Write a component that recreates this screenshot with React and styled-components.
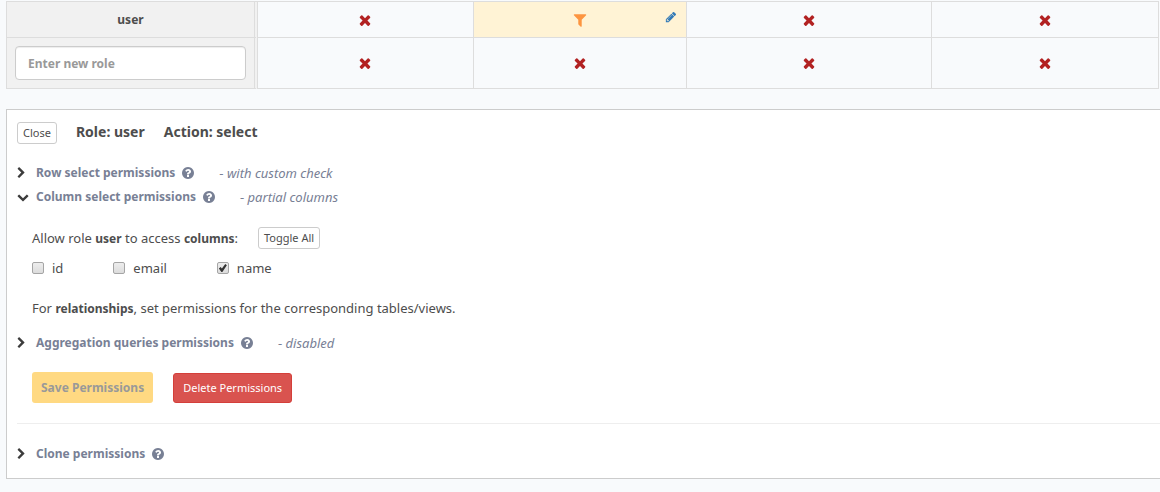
import React, { useState } from "react";
import styled, { createGlobalStyle } from "styled-components";

const GlobalStyle = createGlobalStyle`
  * { box-sizing: border-box; }
  body {
    margin: 0;
    background: #f8fafc;
    color: #4d4d4d;
    font-family: "Noto Sans", "Open Sans", sans-serif;
    font-size: 12px;
    line-height: 20px;
  }
  button, input { font: inherit; color: inherit; }
`;

const ICONS = {
  times:
    "M1490 1322q0 40-28 68l-136 136q-28 28-68 28t-68-28l-294-294-294 294q-28 28-68 28t-68-28l-136-136q-28-28-28-68t28-68l294-294-294-294q-28-28-28-68t28-68l136-136q28-28 68-28t68 28l294 294 294-294q28-28 68-28t68 28l136 136q28 28 28 68t-28 68l-294 294 294 294q28 28 28 68z",
  filter:
    "M1595 295q17 41-14 70l-493 493v742q0 42-39 59-13 5-25 5-27 0-45-19l-256-256q-19-19-19-45v-486l-493-493q-31-29-14-70 17-39 59-39h1280q42 0 59 39z",
  pencil:
    "M491 1536l91-91-235-235-91 91v107h128v128h107zm523-928q0-22-22-22-10 0-17 7l-542 542q-7 7-7 17 0 22 22 22 10 0 17-7l542-542q7-7 7-17zm-54-192l416 416-832 832h-416v-416zm683 96q0 53-37 90l-166 166-416-416 166-165q36-38 90-38 53 0 91 38l235 234q37 39 37 91z",
  question:
    "M1024 1376v-192q0-14-9-23t-23-9h-192q-14 0-23 9t-9 23v192q0 14 9 23t23 9h192q14 0 23-9t9-23zm256-672q0-88-55.5-163t-138.5-116-170-41q-243 0-371 213-15 24 8 42l132 100q7 6 19 6 16 0 25-12 53-68 86-92 34-24 86-24 48 0 85.5 26t37.5 59q0 38-20 61t-68 45q-63 28-115.5 86.5t-52.5 125.5v36q0 14 9 23t23 9h192q14 0 23-9t9-23q0-19 21.5-49.5t54.5-49.5q32-18 49-28.5t46-35 44.5-48 28-60.5 12.5-81zm384 192q0 209-103 385.5t-279.5 279.5-385.5 103-385.5-103-279.5-279.5-103-385.5 103-385.5 279.5-279.5 385.5-103 385.5 103 279.5 279.5 103 385.5z",
  right:
    "M1363 877l-742 742q-19 19-45 19t-45-19l-166-166q-19-19-19-45t19-45l531-531-531-531q-19-19-19-45t19-45l166-166q19-19 45-19t45 19l742 742q19 19 19 45t-19 45z",
  down:
    "M1683 808l-742 741q-19 19-45 19t-45-19l-742-741q-19-19-19-45.5t19-45.5l166-165q19-19 45-19t45 19l531 531 531-531q19-19 45-19t45 19l166 165q19 19 19 45.5t-19 45.5z",
};

const Svg = styled.svg`
  display: block;
  flex: none;
  width: ${(p) => p.$size}px;
  height: ${(p) => p.$size}px;
  fill: currentColor;
`;

const Icon = ({ name, size }) => (
  <Svg viewBox={name === "right" ? "256 0 1792 1792" : "0 0 1792 1792"} $size={size} aria-hidden="true">
    <path d={ICONS[name]} />
  </Svg>
);

const Page = styled.main`
  padding: 1px 0 13px 6px;
`;

const RoleTable = styled.table`
  width: calc(100% - 1px);
  table-layout: fixed;
  border-collapse: separate;
  border-spacing: 0;
  border-top: 1px solid #ddd;
  margin-bottom: 20px;
`;

const Col = styled.col`
  width: ${(p) => p.$width};
`;

const Row = styled.tr`
  height: ${(p) => p.$height}px;
`;

const RoleCell = styled.th`
  padding: 0 8px;
  background: #f1f1f1;
  border: 0 solid #ddd;
  border-width: 0 0 1px 1px;
  border-right: 4px double #ddd;
  text-align: center;
`;

const AccessCell = styled.td`
  position: relative;
  padding: 0;
  border: 0 solid #ddd;
  border-width: 0 1px 1px 0;
  background: ${(p) => (p.$active ? "#fff3d5" : "transparent")};
`;

const AccessButton = styled.button`
  display: flex;
  width: 100%;
  justify-content: center;
  padding: 0;
  border: 0;
  background: none;
  color: ${(p) => (p.$partial ? "#fd9540" : "#b22222")};
`;

const EditMark = styled.span`
  position: absolute;
  top: 9px;
  right: 9px;
  color: #337ab7;
`;

const RoleInput = styled.input`
  display: block;
  width: 100%;
  height: 34px;
  padding: 0 12px;
  border: 1px solid #ccc;
  border-radius: 4px;
  background: #fff;
  box-shadow: inset 0 1px 1px rgba(0, 0, 0, 0.075);
  font-weight: bold;
  &::placeholder { color: #999; opacity: 1; }
`;

const Panel = styled.section`
  padding: 12px 0 12px 10px;
  border: 1px solid #ccc;
  border-right: 0;
  background: #fff;
`;

const PanelHead = styled.header`
  display: flex;
  align-items: flex-start;
  gap: 19px;
  margin-bottom: 17px;
`;

const PanelTitle = styled.h2`
  margin: 0;
  font-size: 14px;
  line-height: 20px;
`;

const SmallButton = styled.button`
  height: 22px;
  padding: 0 5px;
  border: 1px solid #ccc;
  border-radius: 3px;
  background: #fff;
  font-size: 11px;
  line-height: 18px;
`;

const SectionRow = styled.div`
  display: flex;
  align-items: center;
  height: 24px;
  color: #788095;
`;

const SectionToggle = styled.button`
  display: flex;
  align-items: center;
  gap: 7px;
  padding: 0;
  border: 0;
  background: none;
  font-weight: bold;
`;

const Chevron = styled.span`
  color: #3c3c3c;
`;

const Help = styled.span`
  margin-left: 6px;
`;

const Status = styled.span`
  margin-left: 24px;
  font-size: 13px;
`;

const Indent = styled.div`
  padding: 18px 0 12px 15px;
`;

const Line = styled.div`
  display: flex;
  align-items: center;
  gap: 20px;
  height: 22px;
`;

const Columns = styled.div`
  display: flex;
  gap: 50px;
  margin: 9px 0 20px;
`;

const CheckLabel = styled.label`
  display: flex;
  align-items: center;
  gap: 8px;
  font-size: 13px;
`;

const Check = styled.input`
  appearance: none;
  display: grid;
  place-items: center;
  width: 12px;
  height: 12px;
  margin: 0;
  border: 1px solid #a5a5a5;
  border-radius: 2px;
  background: linear-gradient(#ededed, #dcdcdc);
  &:checked::after {
    content: "";
    width: 8px;
    height: 8px;
    background: #333;
    clip-path: polygon(0 56%, 22% 36%, 38% 56%, 80% 0, 100% 16%, 44% 100%, 32% 100%);
  }
`;

const Text = styled.p`
  margin: 0;
  font-size: 13px;
  b { font-size: 12px; }
`;

const Actions = styled.div`
  display: flex;
  align-items: flex-end;
  gap: 20px;
  padding: 17px 0 20px 15px;
`;

const SaveButton = styled.button`
  height: 31px;
  padding: 0 9px;
  border: 0;
  border-radius: 3px;
  background: #ffd982;
  color: #999;
  font-weight: bold;
`;

const DeleteButton = styled.button`
  height: 30px;
  padding: 0 9px;
  border: 1px solid #d43f3a;
  border-radius: 3px;
  background: #d9534f;
  color: #fff;
  font-size: 11px;
`;

const Divider = styled.hr`
  margin: 0 0 18px;
  border: 0;
  border-top: 1px solid #eee;
`;

function Access({ partial, label }) {
  return (
    <AccessCell $active={partial}>
      <AccessButton type="button" $partial={partial} aria-label={label}>
        <Icon name={partial ? "filter" : "times"} size={16} />
      </AccessButton>
      {partial && (
        <EditMark>
          <Icon name="pencil" size={12} />
        </EditMark>
      )}
    </AccessCell>
  );
}

function Section({ title, status, open }) {
  return (
    <SectionRow>
      <SectionToggle type="button" aria-expanded={!!open}>
        <Chevron>
          <Icon name={open ? "down" : "right"} size={12} />
        </Chevron>
        {title}
      </SectionToggle>
      <Help>
        <Icon name="question" size={14} />
      </Help>
      {status && (
        <Status>
          - <i>{status}</i>
        </Status>
      )}
    </SectionRow>
  );
}

const ACTIONS = ["insert", "select", "update", "delete"];

export default function App() {
  const [checked, setChecked] = useState({ id: false, email: false, name: true });
  const toggle = (key) => setChecked((c) => ({ ...c, [key]: !c[key] }));
  const toggleAll = () =>
    setChecked((c) => {
      const next = !Object.values(c).every(Boolean);
      return { id: next, email: next, name: next };
    });

  return (
    <>
      <GlobalStyle />
      <Page>
        <RoleTable>
          <colgroup>
            <Col $width="252px" />
            <Col $width="18.7%" />
            <Col $width="18.5%" />
            <Col $width="21.3%" />
            <Col />
          </colgroup>
          <tbody>
            <Row $height={36}>
              <RoleCell scope="row">user</RoleCell>
              {ACTIONS.map((a) => (
                <Access key={a} partial={a === "select"} label={`user ${a}`} />
              ))}
            </Row>
            <Row $height={51}>
              <RoleCell scope="row">
                <RoleInput placeholder="Enter new role" aria-label="New role" />
              </RoleCell>
              {ACTIONS.map((a) => (
                <Access key={a} label={`new role ${a}`} />
              ))}
            </Row>
          </tbody>
        </RoleTable>

        <Panel>
          <PanelHead>
            <SmallButton type="button">Close</SmallButton>
            <PanelTitle>Role: user</PanelTitle>
            <PanelTitle>Action: select</PanelTitle>
          </PanelHead>

          <Section title="Row select permissions" status="with custom check" />
          <Section title="Column select permissions" status="partial columns" open />
          <Indent>
            <Line>
              <Text>
                Allow role <b>user</b> to access <b>columns</b>:
              </Text>
              <SmallButton type="button" onClick={toggleAll}>Toggle All</SmallButton>
            </Line>
            <Columns>
              {Object.keys(checked).map((key) => (
                <CheckLabel key={key}>
                  <Check type="checkbox" checked={checked[key]} onChange={() => toggle(key)} />
                  {key}
                </CheckLabel>
              ))}
            </Columns>
            <Text>
              For <b>relationships</b>, set permissions for the corresponding tables/views.
            </Text>
          </Indent>
          <Section title="Aggregation queries permissions" status="disabled" />

          <Actions>
            <SaveButton type="button" disabled>Save Permissions</SaveButton>
            <DeleteButton type="button">Delete Permissions</DeleteButton>
          </Actions>
          <Divider />
          <Section title="Clone permissions" />
        </Panel>
      </Page>
    </>
  );
}
